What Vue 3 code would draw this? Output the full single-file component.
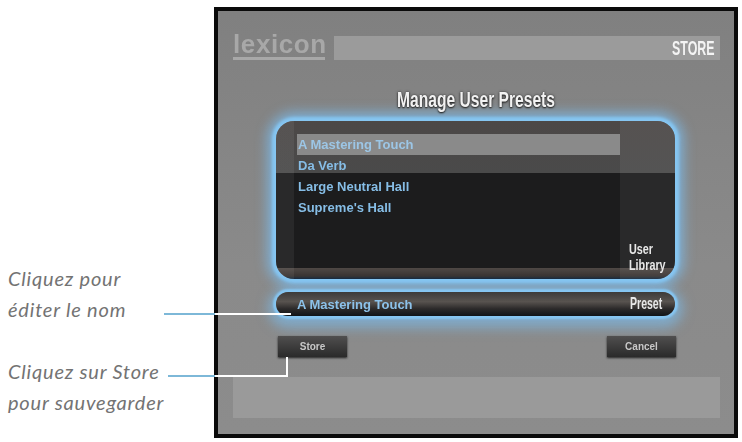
<script setup>
const presets = ['A Mastering Touch', 'Da Verb', 'Large Neutral Hall', "Supreme's Hall"]
</script>

<template>
  <div class="page">
    <div class="captions">
      <p class="caption">Cliquez pour<br />éditer le nom</p>
      <p class="caption">Cliquez sur Store<br />pour sauvegarder</p>
    </div>

    <div class="frame">
      <div class="screen">
        <div class="header">
          <div class="logo">lexicon</div>
          <div class="header-bar"><span class="store-label">STORE</span></div>
        </div>

        <h1 class="title">Manage User Presets</h1>

        <div class="library">
          <ul class="preset-list">
            <li
              v-for="(name, i) in presets"
              :key="name"
              class="preset-row"
              :class="{ selected: i === 0 }"
            >
              {{ name }}
            </li>
          </ul>
          <div class="library-side"><span class="narrow">User<br />Library</span></div>
        </div>

        <div class="preset-bar">
          <span class="preset-name">A Mastering Touch</span>
          <span class="narrow preset-tag">Preset</span>
        </div>

        <div class="actions">
          <button class="action">Store</button>
          <button class="action">Cancel</button>
        </div>

        <div class="footer-bar"></div>
      </div>
    </div>

    <!-- Callout lines -->
    <div class="callout callout-name"><i class="blue"></i><i class="white"></i></div>
    <div class="callout callout-store"><i class="blue"></i><i class="white"></i></div>
    <div class="callout-up"></div>
  </div>
</template>

<style>
html, body {
  margin: 0;
  background: #fff;
}
</style>

<style scoped>
.page {
  position: relative;
  width: 742px;
  height: 442px;
  display: flex;
  overflow: hidden;
  font-family: "Liberation Sans", Arial, sans-serif;
}

.captions {
  width: 214px;
  flex: none;
  padding: 263px 0 0 8px;
  box-sizing: border-box;
}

.caption {
  margin: 0 0 31px;
  font-family: Lato, "Open Sans", sans-serif;
  font-style: italic;
  font-weight: 400;
  font-size: 20px;
  line-height: 31px;
  letter-spacing: 0.8px;
  color: #737373;
  white-space: nowrap;
}

.frame {
  width: 524px;
  height: 431px;
  margin-top: 7px;
  box-sizing: border-box;
  border: 4px solid #0a0a0a;
  background: #858585;
  overflow: hidden;
}

.screen {
  height: 100%;
  display: flex;
  flex-direction: column;
  filter: blur(0.7px);
  background: linear-gradient(#808080, #8a8a8a 60%, #8c8c8c);
}

.header {
  display: flex;
  align-items: flex-end;
  gap: 9px;
  height: 33px;
  margin: 16px 14px 0 15px;
}

.logo {
  width: 92px;
  height: 30px;
  box-sizing: border-box;
  border-bottom: 3px solid #a8a8a8;
  font-size: 26px;
  line-height: 28px;
  font-weight: 700;
  letter-spacing: 0.6px;
  color: #a8a8a8;
  filter: blur(0.5px);
}

.header-bar {
  flex: 1;
  height: 24px;
  display: flex;
  align-items: center;
  justify-content: flex-end;
  padding-right: 5px;
  background: #9b9b9b;
}

.store-label {
  font-size: 20px;
  font-weight: 700;
  color: #f4f4f4;
  transform: scaleX(0.62);
  transform-origin: right center;
}

.title {
  margin: 28px 0 0;
  height: 24px;
  text-align: center;
  font-size: 22px;
  line-height: 24px;
  font-weight: 700;
  color: #f2f2f2;
  text-shadow: 0 1px 2px #222, 0 0 3px #333;
  transform: scaleX(0.71);
  white-space: nowrap;
}

.library {
  width: 399px;
  height: 158px;
  margin: 9px 0 0 58px;
  box-sizing: border-box;
  flex: none;
  display: flex;
  border-radius: 18px;
  overflow: hidden;
  padding: 13px 0 11px 21px;
  background:
    linear-gradient(90deg, rgba(255, 255, 255, 0.06) 18px, transparent 18px),
    linear-gradient(#4c4847 0, #4a4a4a 52px, #1c1c1d 52px, #1c1c1d 147px, #4f4845 147px, #3a3432 155px, #14263a 158px);
  box-shadow: 0 0 3px 4px #86c6f2, 0 0 12px 9px rgba(122, 190, 240, 0.7);
}

.preset-list {
  list-style: none;
  margin: 0;
  padding: 0;
  width: 323px;
  flex: none;
}

.preset-row {
  height: 21px;
  line-height: 21px;
  font-size: 13px;
  font-weight: 700;
  color: #86bde6;
  padding-left: 1px;
}

.preset-row.selected {
  background: #8a8a8a;
  color: #9cc6e6;
}

.library-side {
  flex: 1;
  display: flex;
  align-items: flex-end;
  padding-left: 9px;
  background: rgba(255, 255, 255, 0.06);
  margin-top: -13px;
  margin-bottom: -11px;
  padding-bottom: 6px;
}

.narrow {
  display: block;
  font-weight: 700;
  color: #e8e8e8;
  transform-origin: left center;
}

.library-side .narrow {
  font-size: 15px;
  line-height: 16px;
  transform: scaleX(0.72);
}

.preset-bar {
  width: 399px;
  height: 24px;
  margin: 13px 0 0 58px;
  flex: none;
  box-sizing: border-box;
  display: flex;
  align-items: center;
  justify-content: space-between;
  padding: 0 0 0 21px;
  border-radius: 12px;
  background: linear-gradient(#3c3a39, #58534f 40%, #2c2a2a 70%, #101418 100%);
  box-shadow: 0 0 2px 3px #86c6f2, 0 4px 12px 8px rgba(122, 190, 240, 0.6);
}

.preset-name {
  font-size: 13px;
  font-weight: 700;
  color: #8cc2ea;
}

.preset-tag {
  width: 45px;
  font-size: 17px;
  line-height: 24px;
  transform: scaleX(0.62);
}

.actions {
  display: flex;
  justify-content: space-between;
  width: 398px;
  margin: 20px 0 0 60px;
  flex: none;
}

.action {
  width: 69px;
  height: 21px;
  padding: 0;
  border: none;
  background: linear-gradient(#504f4f, #2a2a2a);
  box-shadow: 0 1px 2px #222;
  font-family: inherit;
  font-size: 10px;
  font-weight: 700;
  color: #c8c8c8;
}

.footer-bar {
  height: 41px;
  margin: 20px 14px 0 15px;
  flex: none;
  background: #9a9a9a;
}

.callout {
  position: absolute;
  display: flex;
  height: 2px;
}

.callout i {
  display: block;
  height: 2px;
}

.callout .blue {
  background: #7db8d8;
}

.callout .white {
  background: #fff;
}

.callout-name {
  left: 164px;
  top: 313px;
}

.callout-name .blue {
  width: 51px;
}

.callout-name .white {
  width: 76px;
}

.callout-store {
  left: 168px;
  top: 375px;
}

.callout-store .blue {
  width: 47px;
}

.callout-store .white {
  width: 73px;
}

.callout-up {
  position: absolute;
  left: 286px;
  top: 357px;
  width: 2px;
  height: 19px;
  background: #fff;
}
</style>
